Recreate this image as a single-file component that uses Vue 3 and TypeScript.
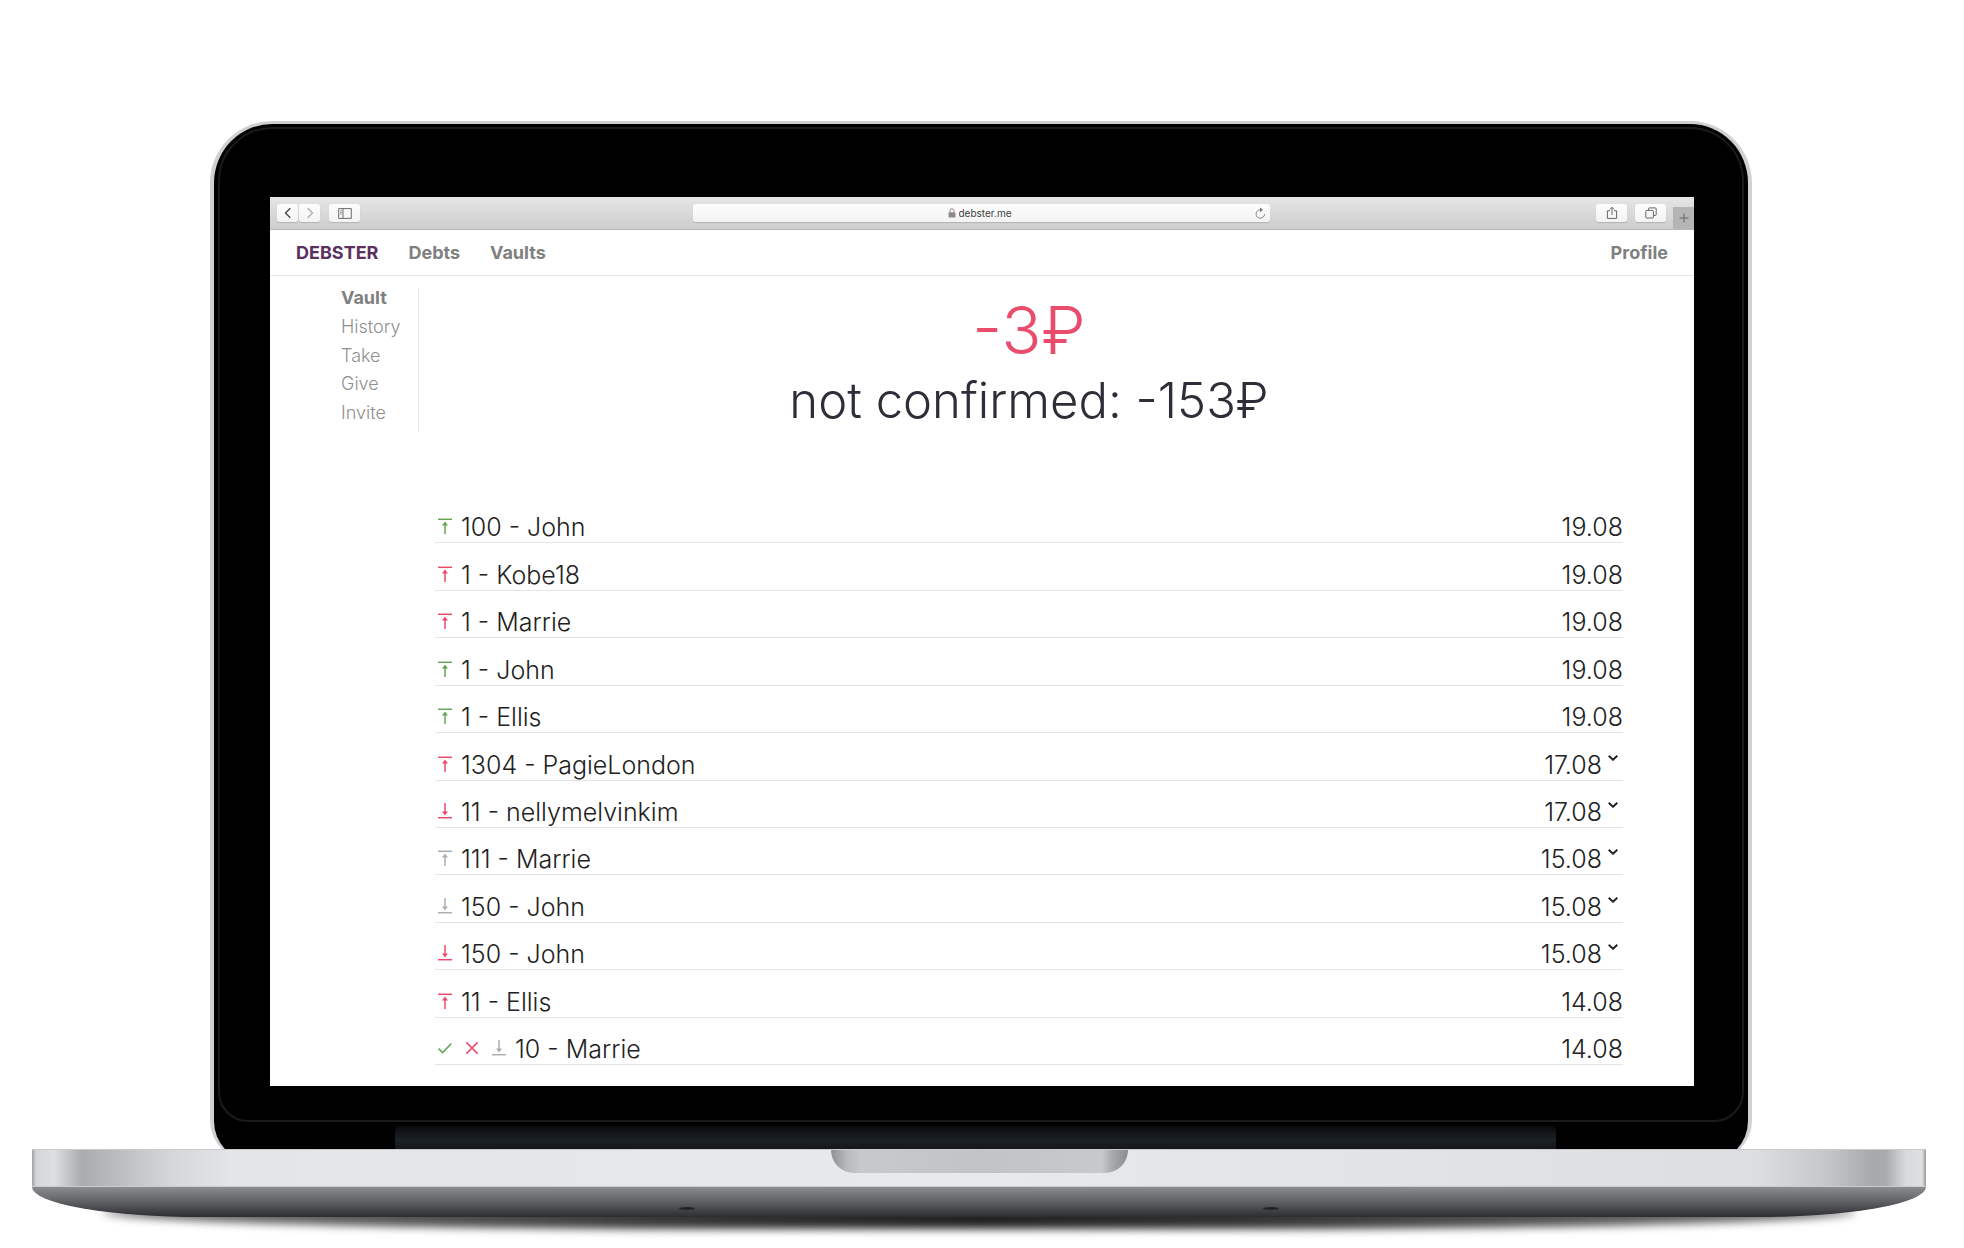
<script setup lang="ts">
type Direction = 'up' | 'down'
type Tone = 'good' | 'bad' | 'idle'

interface Operation {
  id: number
  label: string
  date: string
  direction: Direction
  tone: Tone
  expandable?: boolean
  pending?: boolean
}

const sections: string[] = ['Vault', 'History', 'Take', 'Give', 'Invite']

const operations: Operation[] = [
  { id: 1, label: '100 - John', date: '19.08', direction: 'up', tone: 'good' },
  { id: 2, label: '1 - Kobe18', date: '19.08', direction: 'up', tone: 'bad' },
  { id: 3, label: '1 - Marrie', date: '19.08', direction: 'up', tone: 'bad' },
  { id: 4, label: '1 - John', date: '19.08', direction: 'up', tone: 'good' },
  { id: 5, label: '1 - Ellis', date: '19.08', direction: 'up', tone: 'good' },
  { id: 6, label: '1304 - PagieLondon', date: '17.08', direction: 'up', tone: 'bad', expandable: true },
  { id: 7, label: '11 - nellymelvinkim', date: '17.08', direction: 'down', tone: 'bad', expandable: true },
  { id: 8, label: '111 - Marrie', date: '15.08', direction: 'up', tone: 'idle', expandable: true },
  { id: 9, label: '150 - John', date: '15.08', direction: 'down', tone: 'idle', expandable: true },
  { id: 10, label: '150 - John', date: '15.08', direction: 'down', tone: 'bad', expandable: true },
  { id: 11, label: '11 - Ellis', date: '14.08', direction: 'up', tone: 'bad' },
  { id: 12, label: '10 - Marrie', date: '14.08', direction: 'down', tone: 'idle', pending: true },
]
</script>

<template>
  <div class="stage">
    <div class="laptop">
      <div class="lid">
        <div class="glass">
          <div class="screen">
            <div class="toolbar">
              <div class="group history">
                <button class="tool small" aria-label="Back">
                  <svg width="8" height="12" viewBox="0 0 8 12"><path d="M6.3 1.2 1.5 6l4.8 4.8" fill="none" stroke="#4a4a4a" stroke-width="1.4" /></svg>
                </button>
                <button class="tool small" aria-label="Forward">
                  <svg width="8" height="12" viewBox="0 0 8 12"><path d="M1.7 1.2 6.5 6l-4.8 4.8" fill="none" stroke="#b0b0b0" stroke-width="1.4" /></svg>
                </button>
              </div>
              <button class="tool sidebar-toggle" aria-label="Show sidebar">
                <svg width="14" height="11" viewBox="0 0 14 11" fill="none" stroke="#6b6b6b"><path d="M.7.6h12.6v9.8H.7zM5 .6v9.8" /><path d="M2 2.8h1.8M2 4.4h1.8M2 6h1.8" stroke-width=".7" /></svg>
              </button>
              <div class="address">
                <svg class="lock" width="8" height="10" viewBox="0 0 8 10"><path d="M.6 4.3h6.8v5.2H.6z" fill="#8a8a8a" /><path d="M2 4.5V2.8a2 2 0 0 1 4 0v1.7" fill="none" stroke="#8a8a8a" /></svg>
                <input class="url" type="text" value="debster.me" aria-label="Address" />
                <button class="reload" aria-label="Reload">
                  <svg width="11" height="13" viewBox="0 0 11 13"><path d="M9.5 7A4.2 4.2 0 1 1 5.3 2.8h1" fill="none" stroke="#858585" /><path d="M5 .4 8 2.8 5 5.2z" fill="#777" /></svg>
                </button>
              </div>
              <div class="group">
                <button class="tool" aria-label="Share">
                  <svg width="12" height="14" viewBox="0 0 12 14" fill="none" stroke="#666"><path d="M4 4.8H1.4v7.6h9.2V4.8H8M6 9V1.4M3.8 3.5 6 1.3l2.2 2.2" /></svg>
                </button>
                <button class="tool" aria-label="Show tabs">
                  <svg width="12" height="12" viewBox="0 0 12 12" fill="none" stroke="#666"><rect x=".8" y="3.4" width="7.6" height="7.6" rx="1" /><path d="M3.6 3.2V1.9a1 1 0 0 1 1-1h5.6a1 1 0 0 1 1 1v5.6a1 1 0 0 1-1 1H8.6" /></svg>
                </button>
              </div>
              <button class="newtab" aria-label="New tab">
                <svg width="10" height="10" viewBox="0 0 10 10"><path d="M5 .5v9M.5 5h9" stroke="#666" /></svg>
              </button>
            </div>

            <nav class="nav">
              <a class="brand" href="#">DEBSTER</a>
              <a href="#">Debts</a>
              <a href="#">Vaults</a>
              <a class="profile" href="#">Profile</a>
            </nav>

            <div class="page">
              <aside class="side">
                <a v-for="(s, i) in sections" :key="s" href="#" :class="{ current: i === 0 }">{{ s }}</a>
              </aside>
              <main class="vault">
                <h1 class="balance">-3₽</h1>
                <h2 class="unconfirmed">not confirmed: -153₽</h2>
                <ul class="list">
                  <li v-for="op in operations" :key="op.id" class="row">
                    <button v-if="op.pending" class="act" aria-label="Confirm">
                      <svg width="14" height="14" viewBox="0 0 14 14"><path d="M.6 7.6 4.6 11.6 13.4 2.4" fill="none" stroke="#63a653" stroke-width="1.5" /></svg>
                    </button>
                    <button v-if="op.pending" class="act" aria-label="Reject">
                      <svg width="14" height="14" viewBox="0 0 14 14"><path d="M1.4 1.4 12.6 12.6M12.6 1.4 1.4 12.6" fill="none" stroke="#ec4a6b" stroke-width="1.5" /></svg>
                    </button>
                    <svg class="arrow" :class="[op.tone, op.direction]" width="14" height="16" viewBox="0 0 14 16">
                      <path d="M0 1.3h14" stroke="currentColor" stroke-width="1.5" />
                      <path d="M7 16V5" stroke="currentColor" stroke-width="1.5" />
                      <path d="M7 3.6 10 7.4H4z" fill="currentColor" />
                    </svg>
                    <span class="label">{{ op.label }}</span>
                    <time class="date">{{ op.date }}</time>
                    <button v-if="op.expandable" class="more" aria-label="Show details">
                      <svg width="10" height="6" viewBox="0 0 10 6"><path d="M.7.8 5 4.8 9.3.8" fill="none" stroke="#222" stroke-width="1.9" /></svg>
                    </button>
                  </li>
                </ul>
              </main>
            </div>
          </div>
        </div>
        <div class="hinge"></div>
      </div>
      <div class="base">
        <div class="deck"><div class="notch"></div></div>
        <div class="belly"><i class="foot"></i><i class="foot"></i></div>
      </div>
    </div>
  </div>
</template>

<style>
body {
  margin: 0;
  background: #fff;
}
</style>

<style scoped>
* {
  box-sizing: border-box;
}
.stage {
  padding: 121px 38px 28px 32px;
  overflow: hidden;
  font-family: Inter, "Open Sans", sans-serif;
}
button {
  display: flex;
  align-items: center;
  justify-content: center;
  padding: 0;
  border: 0;
  background: none;
}
a {
  color: inherit;
  text-decoration: none;
}

/* Lid: the lower corners run on behind the base, so the last 12px are clipped */
.lid {
  margin: 0 174px -12px 178px;
  padding: 3px 6px 12px;
  border: solid #cfd1d3;
  border-width: 3px 4px 0;
  border-radius: 62px 62px 42px 42px / 62px 62px 40px 40px;
  background: #000;
  clip-path: inset(0 0 12px 0);
}
.glass {
  margin: 0 -2px;
  padding: 68px 48px 34px 50px;
  border: 2px solid #1b1b1b;
  border-radius: 54px 54px 30px 30px;
}
.hinge {
  height: 23px;
  margin: 4px 186px 0 175px;
  border-radius: 5px 5px 0 0;
  background: linear-gradient(#0a0a0e, #1b2024 60%, #14181b);
}

/* Base */
.base {
  position: relative;
}
.deck {
  display: flex;
  justify-content: center;
  height: 38px;
  border-top: 1px solid #c9cacc;
  border-bottom: 1px solid #c9cdd0;
  background: linear-gradient(90deg, #9fa0a4 0, #d4d5d8 4px, #dedfe1 22px, #a9abae 50px, #b9babd 80px, #d6d7da 140px, #e4e5e8 200px, #e8e9eb 50%, #dddee1 calc(100% - 170px), #c6c7c9 calc(100% - 100px), #a6a8ab calc(100% - 52px), #a9abae calc(100% - 40px), #d9dadc calc(100% - 20px), #dfe0e2 calc(100% - 4px), #97989b 100%);
}
.notch {
  width: 297px;
  height: 23px;
  border-radius: 0 0 23px 23px;
  background: linear-gradient(90deg, #8f9094, #b9babd 16px, #c8c9cb 30px, #c2c3c5 50%, #c8c9cb calc(100% - 26px), #a9aaad calc(100% - 16px), #8a8b8f);
}
.belly {
  position: relative;
  display: flex;
  justify-content: center;
  align-items: flex-end;
  gap: 568px;
  height: 30px;
  padding-bottom: 7px;
  border-radius: 0 0 170px 170px / 0 0 30px 30px;
  background: linear-gradient(#8b8c8f, #68696c 40%, #2c2d30);
}
.foot {
  width: 16px;
  height: 3px;
  border-radius: 50%;
  background: #222326;
}
.base::after {
  content: "";
  position: absolute;
  z-index: -1;
  left: 70px;
  right: 70px;
  bottom: -12px;
  height: 24px;
  border-radius: 50% / 10px 10px 100% 100%;
  background: linear-gradient(90deg, #777, #333 35%, #222 50%, #333 65%, #777);
  filter: blur(4px);
}

/* Browser */
.screen {
  background: #fff;
  color: #222;
}
.toolbar {
  display: flex;
  align-items: center;
  height: 33px;
  padding-left: 7px;
  border-bottom: 1px solid #b9b9b9;
  background: linear-gradient(#e6e6e6, #cdcdcd);
}
.group {
  display: flex;
  gap: 8px;
}
.history {
  gap: 1px;
  margin-right: 9px;
}
.tool {
  width: 31px;
  height: 18px;
  border-radius: 3px;
  background: linear-gradient(#fdfdfd, #f3f3f3);
  box-shadow: 0 1px 1px rgba(0, 0, 0, 0.15);
}
.small {
  width: 21px;
}
.sidebar-toggle {
  margin-right: 6px;
}
.address {
  position: relative;
  display: flex;
  align-items: center;
  justify-content: center;
  gap: 3px;
  width: 577px;
  height: 18px;
  margin: 0 auto;
  border-radius: 3px;
  background: linear-gradient(#fdfdfd, #f3f3f3);
  box-shadow: 0 1px 1px rgba(0, 0, 0, 0.15);
}
.url {
  width: 56px;
  padding: 0;
  border: 0;
  background: none;
  color: #404040;
  font: 10px/18px Inter, sans-serif;
}
.reload {
  position: absolute;
  right: 4px;
}
.newtab {
  align-self: flex-end;
  width: 21px;
  height: 22px;
  margin-left: 7px;
  background: #b5b5b5;
}

/* Site */
.nav {
  display: flex;
  align-items: center;
  gap: 30px;
  height: 46px;
  padding: 0 26px;
  border-bottom: 1px solid #e6e6e6;
  color: #808080;
  font-size: 18px;
  font-weight: 700;
}
.brand {
  color: #5c2f60;
}
.profile {
  margin-left: auto;
}
.page {
  display: flex;
  align-items: flex-start;
  gap: 16px;
  padding: 12px 71px 21px;
}
.side {
  display: grid;
  grid-auto-rows: 1fr;
  width: 78px;
  min-height: 144px;
  border-right: 1px solid #e6e6e6;
  color: #8f8f8f;
  font-size: 18px;
  font-weight: 300;
  line-height: 20px;
}
.current {
  color: #808080;
  font-weight: 700;
}
.vault {
  flex: 1;
}
h1,
h2 {
  margin: 0;
  font-weight: 300;
  text-align: center;
}
.balance {
  color: #ea4c6c;
  font-size: 66px;
  line-height: 84px;
}
.unconfirmed {
  margin-bottom: 66px;
  color: #302c38;
  font-size: 49px;
  line-height: 58px;
}
.list {
  display: grid;
  grid-auto-rows: 1fr;
  min-height: 569px;
  margin: 0;
  padding: 0;
  list-style: none;
}
.row {
  display: flex;
  align-items: flex-end;
  padding-left: 3px;
  border-bottom: 1px solid #e4e4e4;
  font-size: 25px;
  font-weight: 300;
  line-height: 30px;
}
.arrow {
  margin: 0 9px 8px 0;
}
.down {
  transform: rotate(180deg);
}
.good {
  color: #63a653;
}
.bad {
  color: #ec4a6b;
}
.idle {
  color: #adadad;
}
.act {
  margin: 0 13px 9px 0;
}
.label {
  flex: 1;
}
.more {
  margin: 0 5px 19px 6px;
}
</style>
